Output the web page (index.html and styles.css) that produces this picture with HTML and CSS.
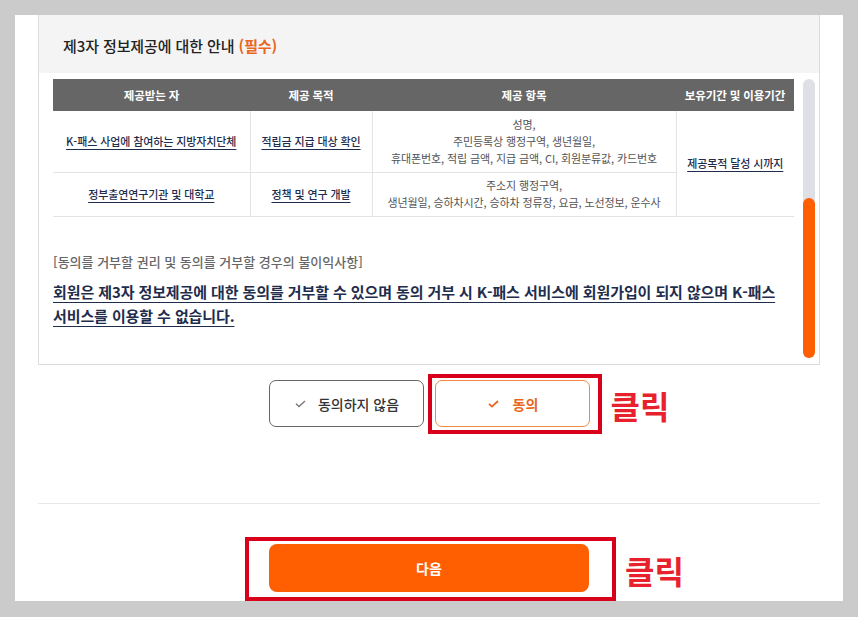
FILE: index.html
```html
<!DOCTYPE html>
<html lang="ko">
<head>
<meta charset="utf-8">
<title>제3자 정보제공 동의</title>
<link rel="stylesheet" href="styles.css">
</head>
<body>
<div class="panel">
  <section class="consent">
    <div class="consent-head">
      <h2 class="consent-title">제3자 정보제공에 대한 안내 <span class="req">(필수)</span></h2>
    </div>
    <div class="consent-body">
      <div class="scroll-content">
        <table class="info-table">
          <colgroup>
            <col class="c1"><col class="c2"><col class="c3"><col class="c4">
          </colgroup>
          <thead>
            <tr>
              <th>제공받는 자</th>
              <th>제공 목적</th>
              <th>제공 항목</th>
              <th>보유기간 및 이용기간</th>
            </tr>
          </thead>
          <tbody>
            <tr class="r1">
              <td class="bordered"><span class="link">K-패스 사업에 참여하는 지방자치단체</span></td>
              <td class="bordered"><span class="link">적립금 지급 대상 확인</span></td>
              <td class="bordered items">성명,<br>주민등록상 행정구역, 생년월일,<br>휴대폰번호, 적립 금액, 지급 금액, CI, 회원분류값, 카드번호</td>
              <td rowspan="2" class="last"><span class="link">제공목적 달성 시까지</span></td>
            </tr>
            <tr class="r2">
              <td class="bordered"><span class="link">정부출연연구기관 및 대학교</span></td>
              <td class="bordered"><span class="link">정책 및 연구 개발</span></td>
              <td class="bordered items">주소지 행정구역,<br>생년월일, 승하차시간, 승하차 정류장, 요금, 노선정보, 운수사</td>
            </tr>
          </tbody>
        </table>
        <p class="rights-title">[동의를 거부할 권리 및 동의를 거부할 경우의 불이익사항]</p>
        <p class="rights-text"><span class="link">회원은 제3자 정보제공에 대한 동의를 거부할 수 있으며 동의 거부 시 K-패스 서비스에 회원가입이 되지 않으며 K-패스 서비스를 이용할 수 없습니다.</span></p>
      </div>
      <div class="scrollbar"><div class="thumb"></div></div>
    </div>
  </section>

  <div class="actions">
    <button class="choice">
      <svg class="chk" width="11" height="8" viewBox="0 0 11 8"><polyline points="1,3.8 4,6.6 10,1" fill="none" stroke="#7a7a7a" stroke-width="1.4"/></svg>
      동의하지 않음
    </button>
    <div class="marked agree-mark">
      <button class="choice agree">
        <svg class="chk" width="11" height="8" viewBox="0 0 11 8"><polyline points="1,3.8 4,6.6 10,1" fill="none" stroke="#e8661e" stroke-width="1.8"/></svg>
        동의
      </button>
      <span class="click-label">클릭</span>
    </div>
  </div>

  <div class="next-area">
    <div class="marked next-mark">
      <button class="next">다음</button>
      <span class="click-label">클릭</span>
    </div>
  </div>
</div>
</body>
</html>
```

FILE: styles.css
```css
* { box-sizing: border-box; }

html, body {
  margin: 0;
  padding: 0;
  background: #cbcbcb;
  font-family: "Noto Sans CJK KR", "Noto Sans", sans-serif;
  word-break: keep-all;
}

.panel {
  width: 828px;
  height: 586px;
  margin: 15px 0 0 15px;
  padding: 0 23px;
  background: #fff;
  position: relative;
}

.consent {
  height: 350px;
  border: 1px solid #dcdcdc;
  border-top: 0;
  display: flex;
  flex-direction: column;
}

.consent-head {
  height: 58px;
  background: #f4f4f4;
  padding: 2px 0 0 24px;
  display: flex;
  align-items: center;
}

.consent-title {
  margin: 0;
  font-size: 15px;
  font-weight: 500;
  color: #222;
  letter-spacing: -0.1px;
}

.req {
  color: #e8661e;
  font-weight: 700;
}

.consent-body {
  flex: 1;
  display: flex;
  gap: 9px;
  padding: 6px 4px 6px 14px;
  overflow: hidden;
}

.scroll-content {
  width: 741px;
  flex: none;
}

.scrollbar {
  width: 12px;
  flex: none;
  background: #dfe0e6;
  border-radius: 6px;
  display: flex;
  flex-direction: column;
  justify-content: flex-end;
}

.thumb {
  height: 160px;
  background: #ff5f00;
  border-radius: 6px;
}

.info-table {
  width: 741px;
  border-collapse: collapse;
  table-layout: fixed;
}

.info-table col.c1 { width: 197px; }
.info-table col.c2 { width: 122px; }
.info-table col.c3 { width: 304px; }
.info-table col.c4 { width: 118px; }

.info-table th {
  height: 32px;
  background: #666;
  color: #fff;
  font-size: 11.5px;
  font-weight: 700;
  padding: 0;
  text-align: center;
  white-space: nowrap;
  letter-spacing: -0.1px;
}

.info-table td {
  text-align: center;
  vertical-align: middle;
  font-size: 11px;
  color: #555;
  padding: 0;
  border-bottom: 1px solid #e3e3e3;
  letter-spacing: -0.1px;
}

.info-table td.bordered {
  border-right: 1px solid #e3e3e3;
}

.info-table tr.r1 td { height: 61px; }
.info-table tr.r2 td { height: 44px; }

.info-table td.items {
  line-height: 17px;
  white-space: nowrap;
}

.info-table td.last {
  white-space: nowrap;
}

.link {
  color: #1f2d4d;
  font-weight: 500;
  text-decoration: underline;
  text-decoration-color: #1f2d4d;
  text-underline-offset: 3px;
}

.rights-title {
  margin: 35px 0 0;
  font-size: 13px;
  line-height: 19px;
  font-weight: 500;
  color: #666;
  letter-spacing: 0;
}

.rights-text {
  margin: 9px 0 0;
  font-size: 15px;
  line-height: 24px;
  font-weight: 700;
  letter-spacing: -0.1px;
}

.rights-text .link {
  font-weight: 700;
  text-underline-offset: 4px;
  text-decoration-thickness: 1px;
}

.actions {
  height: 139px;
  padding-top: 15px;
  display: flex;
  justify-content: center;
  align-items: flex-start;
  gap: 11px;
  border-bottom: 1px solid #e8e8e8;
}

.choice {
  width: 155px;
  height: 47px;
  border: 1px solid #666;
  border-radius: 7px;
  background: #fff;
  font-family: inherit;
  font-size: 14px;
  font-weight: 500;
  color: #333;
  display: flex;
  align-items: center;
  justify-content: center;
  gap: 12px;
  padding: 0 0 0 2px;
}

.choice.agree {
  border-color: #ee8a44;
  color: #e8661e;
  font-weight: 700;
  gap: 14px;
}

.marked {
  position: relative;
}

.marked::after {
  content: "";
  position: absolute;
  border: 4px solid #d9001b;
  pointer-events: none;
}

.agree-mark::after {
  left: -7px;
  right: -12px;
  top: -6px;
  bottom: -7px;
}

.click-label {
  position: absolute;
  top: 50%;
  transform: translateY(-50%);
  font-size: 32px;
  font-weight: 700;
  color: #e8222d;
  line-height: 1;
  white-space: nowrap;
}

.agree-mark .click-label {
  left: calc(100% + 21px);
  margin-top: 1px;
}

.next-area {
  padding-top: 40px;
  display: flex;
  justify-content: center;
}

.next {
  width: 320px;
  height: 48px;
  background: #ff5f00;
  border: 0;
  border-radius: 8px;
  color: #fff;
  font-family: inherit;
  font-size: 14px;
  font-weight: 700;
  display: block;
}

.next-mark::after {
  left: -24px;
  right: -27px;
  top: -7px;
  bottom: -9px;
}

.next-mark .click-label {
  left: calc(100% + 36px);
  margin-top: 2px;
}
```
